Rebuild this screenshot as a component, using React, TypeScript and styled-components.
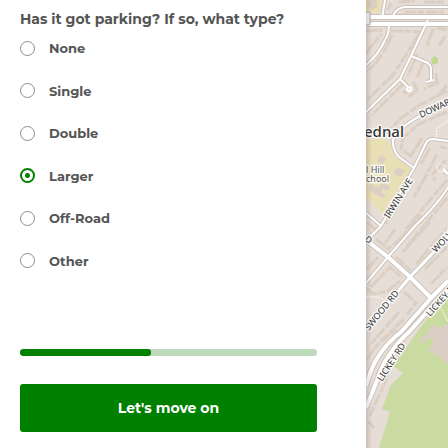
import React, { useState } from "react";
import styled, { createGlobalStyle } from "styled-components";

const GlobalStyle = createGlobalStyle`
  *, *::before, *::after { box-sizing: border-box; }
  body {
    margin: 0;
    background: #fff;
    color: #555;
    font-family: Montserrat, Inter, "Liberation Sans", sans-serif;
    font-weight: 700;
  }
`;

const Page = styled.main`
  display: flex;
  min-height: 100vh;
  overflow: hidden;
`;

const Panel = styled.form`
  flex: 0 1 366px;
  min-width: 0;
  display: flex;
  flex-direction: column;
  padding: 9px 49px 16px 20px;
`;

const Question = styled.fieldset`
  margin: 0;
  padding: 0;
  border: 0;
  min-width: 0;
`;

const Title = styled.legend`
  padding: 0;
  font-size: 14px;
  line-height: 20px;
  white-space: nowrap;
`;

const Options = styled.div`
  display: flex;
  flex-direction: column;
  justify-content: space-between;
  height: 229px;
  margin-top: 11px;
`;

const Option = styled.label`
  display: flex;
  align-items: center;
  gap: 14px;
  font-size: 13px;
  line-height: 16px;
  cursor: pointer;
`;

const Radio = styled.input`
  appearance: none;
  flex: none;
  width: 15px;
  height: 15px;
  margin: 0;
  border: 1px solid #8c8c8c;
  border-radius: 50%;
  background: #fff;

  &:checked {
    border: 2px solid #008000;
    background: radial-gradient(circle, #008000 2px, #fff 3px);
  }
`;

const Progress = styled.div`
  height: 7px;
  margin-top: 80px;
  border-radius: 3px;
  background: #bddaba;
  overflow: hidden;
`;

const ProgressFill = styled.div`
  height: 100%;
  border-radius: 3px;
  background: #008000;
`;

const NextButton = styled.button`
  height: 48px;
  margin-top: 28px;
  border: 0;
  border-radius: 3px;
  background: #008000;
  color: #fff;
  font: inherit;
  font-size: 14px;
  cursor: pointer;
`;

const MapPane = styled.aside`
  flex: 1 1 0;
  min-width: 0;
  position: relative;
  background: #e6ddd6;

  &::after {
    content: "";
    position: absolute;
    inset: 0 auto 0 0;
    width: 6px;
    background: linear-gradient(to right, rgba(90, 70, 60, 0.2), transparent);
  }
`;

const MapDrawing = styled.svg`
  position: absolute;
  width: 100%;
  height: 100%;
  font-family: "Noto Sans", sans-serif;
`;

const MapLabel = styled.text<{ $size: number; $weight?: number; $color?: string }>`
  font-size: ${(p) => p.$size}px;
  font-weight: ${(p) => p.$weight ?? 400};
  fill: ${(p) => p.$color ?? "#333"};
  stroke: #fff;
  stroke-opacity: 0.8;
  stroke-width: 3px;
  stroke-linejoin: round;
  paint-order: stroke;
`;

const houses = [
  "M366 31 L382 30 M366 53 L374 43 L381 34 M391 31 L406 31 L423 32",
  "M392 35 L386 48 L376 63 L367 72 M419 34 L404 58 L393 75 L367 100",
  "M417 54 L408 76 M424 58 L421 68 L417 78 M433 29 L427 46",
  "M437 28 L447 30 M445 36 L439 46 M436 73 L437 83 L424 89",
  "M404 83 L372 115 M413 82 L417 90 L410 96 L403 91 M447 85 L438 96",
  "M391 3 L388 10 M399 2 L415 1 M424 2 L445 2 M404 12 L444 12",
  "M447 91 L418 106 L400 119 L388 132 M447 112 L419 124 L403 138 L401 149 L412 157",
  "M422 138 L410 157 M430 148 L421 164 M440 147 L447 148 M437 154 L427 174 L414 197",
  "M446 160 L433 174 L435 181 M447 180 L430 200 L405 230 M447 198 L431 217 L405 249",
  "M407 183 L394 213 L386 224 M367 222 L377 231 M395 229 L385 243",
  "M376 239 L388 249 L398 241 L421 215 M403 252 L430 222 M396 257 L411 271",
  "M416 264 L447 228 M425 269 L447 247 M367 269 L378 257 M371 287 L390 267 L403 278",
  "M367 289 L374 294 L388 291 L400 281 M413 284 L427 295 M431 284 L447 267",
  "M404 292 L416 303 L407 314 M399 312 L386 327 L371 344 M367 359 L379 343 L397 329",
  "M404 319 L382 340 M388 374 L382 390 L374 406 M374 407 L370 416 M368 421 L374 428",
];

const roads = [
  { d: "M366 17 H448 M366 24 H448", w: 4 },
  { d: "M385 0 L382 18 M389 24 Q389 34 385 40 Q379 54 366 65", w: 2 },
  { d: "M393 16 Q396 8 405 7 H448", w: 2 },
  { d: "M428 20 L411 56 L400 79 L366 112", w: 2 },
  { d: "M411 56 L428 63 Q432 67 431 72 L431 81 M426 82 L434 80 M400 79 L409 88", w: 2 },
  { d: "M448 102 L420 116 Q398 128 393 140 Q392 149 399 157 L414 168", w: 2 },
  { d: "M448 141 L433 139 Q428 139 426 143 L414 168 L381 226 L367 240", w: 2 },
  { d: "M366 213 L381 226 M448 187 Q439 203 415 226 L388 257 L366 283", w: 2 },
  { d: "M448 237 L410 277 L366 329", w: 3 },
  { d: "M366 240 L388 257 L410 277 L432 299", w: 4 },
  { d: "M448 281 L431 298 L401 332 Q379 349 370 373 L366 386", w: 4 },
  { d: "M448 290 L434 304 L410 331 Q386 353 378 378 L366 408", w: 4 },
  { d: "M443 169 L448 174", w: 3 },
];

function AreaMap() {
  return (
    <MapDrawing viewBox="366 0 82 448" preserveAspectRatio="xMinYMin slice" role="img" aria-label="Area map">
      <path fill="#e9dfb5" d="M366 0 H382 L380 13 H366Z M366 140 L384 138 L391 145 L394 156 L413 168 L383 214 L366 197Z" />
      <path fill="#c9dba0" d="M448 296 L425 321 L393 366 L403 373 L391 385 L382 409 L390 412 L379 448 H448Z" />
      <path fill="#dbcec4" d="M419 341 L434 325 L440 328 L448 323 V365 L438 356 L428 350 L434 342 L429 337 L423 344Z M369 0 H377 V7 L372 10 L367 4Z M377 159 L381 155 L386 159 L382 164 L378 162Z M394 171 L398 167 L405 171 L401 176 L395 175Z M371 184 L378 188 L383 182 L390 187 L387 191 L383 188 L381 192 L386 195 L383 198 L369 190Z" />
      <path fill="#bdd98e" d="M431 60 L434 56 L438 58 V63 L433 65Z" />
      <g fill="none" stroke="#dbcfc4" strokeWidth="3" strokeDasharray="12 1 7 2">
        {houses.map((d) => <path key={d} d={d} />)}
      </g>
      <g fill="none" stroke="#fff" strokeWidth="1" strokeDasharray="2 1">
        <path d="M436 138 L437 128 L448 121 M366 297 H379 L386 301 M440 306 L448 322" />
      </g>
      <g fill="none" stroke="#cac2bc" strokeLinejoin="round">
        {roads.map((r) => <path key={r.d} d={r.d} strokeWidth={r.w + 2} />)}
      </g>
      <g fill="none" stroke="#fff" strokeLinejoin="round">
        {roads.map((r) => <path key={r.d} d={r.d} strokeWidth={r.w} />)}
      </g>
      <circle cx="409" cy="89" r="2" fill="#ddd" stroke="#fff" strokeWidth="2" />
      <circle cx="441" cy="168" r="4" fill="none" stroke="#fff" strokeDasharray="2 1" />
      <rect x="360" y="12" width="10" height="13" rx="1" fill="#f6f6f6" stroke="#aaa" />
      <MapLabel $size={15} $weight={500} x="364" y="137">ednal</MapLabel>
      <MapLabel $size={9} $color="#555" x="366" y="173">l Hill</MapLabel>
      <MapLabel $size={9} $color="#555" x="366" y="182">chool</MapLabel>
      <MapLabel $size={9} transform="translate(421 118) rotate(-25)">DOWARD</MapLabel>
      <MapLabel $size={9} transform="translate(389 219) rotate(-58)">IRWIN AVE</MapLabel>
      <MapLabel $size={9} transform="translate(436 253) rotate(-47)">WOLVERTON</MapLabel>
      <MapLabel $size={9} transform="translate(369 331) rotate(-51)">SWOOD RD</MapLabel>
      <MapLabel $size={9} transform="translate(430 317) rotate(-48)">LICKEY RD</MapLabel>
      <MapLabel $size={9} transform="translate(382 382) rotate(-57)">LICKEY RD</MapLabel>
      <MapLabel $size={9} transform="translate(364 240) rotate(40)">D</MapLabel>
      <MapLabel $size={9} transform="translate(362 289) rotate(-50)">D</MapLabel>
    </MapDrawing>
  );
}

const choices = ["None", "Single", "Double", "Larger", "Off-Road", "Other"];

export default function App() {
  const [parking, setParking] = useState("Larger");
  const progress = 44;

  return (
    <>
      <GlobalStyle />
      <Page>
        <Panel onSubmit={(e: React.FormEvent) => e.preventDefault()}>
          <Question>
            <Title>Has it got parking? If so, what type?</Title>
            <Options>
              {choices.map((choice) => (
                <Option key={choice}>
                  <Radio
                    type="radio"
                    name="parking"
                    value={choice}
                    checked={parking === choice}
                    onChange={() => setParking(choice)}
                  />
                  {choice}
                </Option>
              ))}
            </Options>
          </Question>
          <Progress role="progressbar" aria-label="Progress" aria-valuemin={0} aria-valuemax={100} aria-valuenow={progress}>
            <ProgressFill style={{ width: `${progress}%` }} />
          </Progress>
          <NextButton type="submit">Let's move on</NextButton>
        </Panel>
        <MapPane>
          <AreaMap />
        </MapPane>
      </Page>
    </>
  );
}
